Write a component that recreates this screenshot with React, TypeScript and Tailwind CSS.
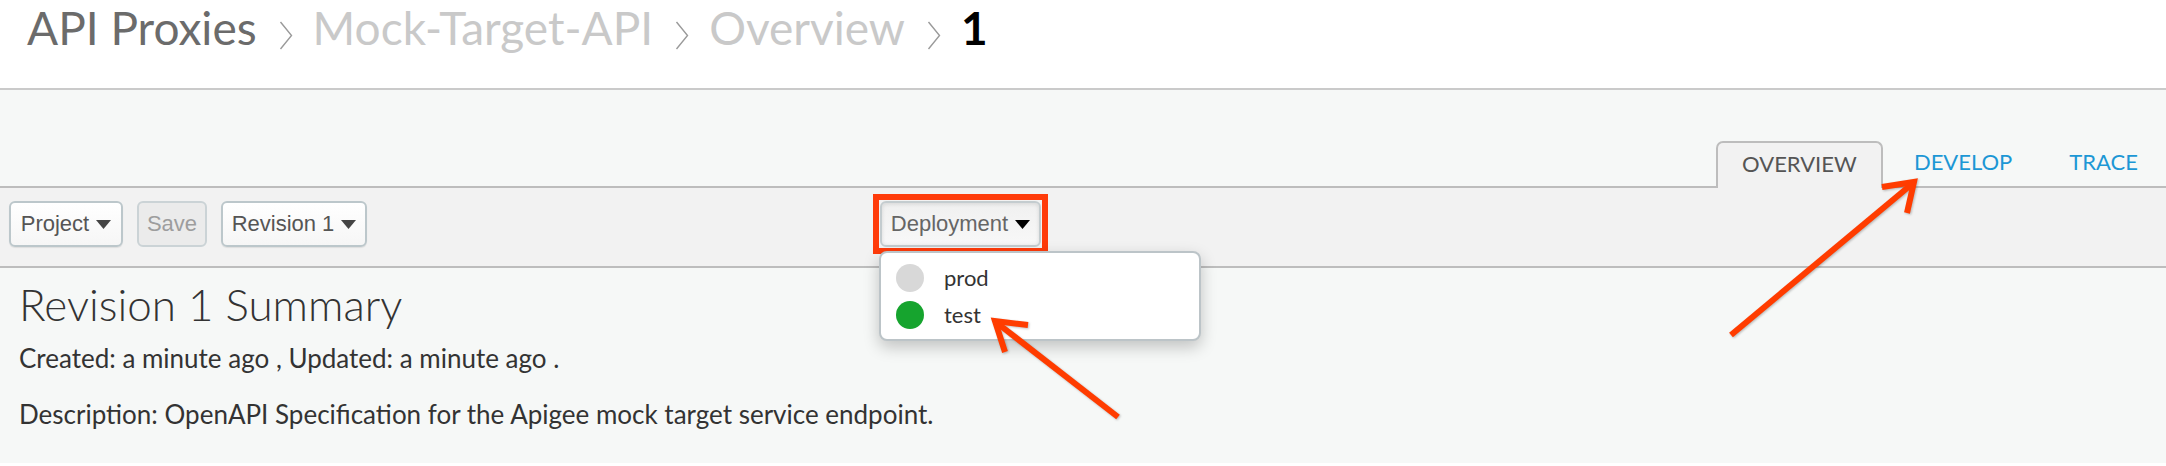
import React from 'react';

const lato = { fontFamily: 'Lato, "Open Sans", sans-serif' };

const Chevron = () => (
  <svg width="14" height="29" viewBox="0 0 14 29" className="ml-[22px] mr-[20px] mt-[16px] shrink-0">
    <path d="M1.5 1 L12.5 14.5 L1.5 28" fill="none" stroke="#9a9a9a" strokeWidth="1.4" />
  </svg>
);

const Caret = ({ color = '#444' }: { color?: string }) => (
  <svg width="15" height="9" viewBox="0 0 15 9" className="ml-[7px] shrink-0">
    <path d="M0 0 H15 L7.5 9 Z" fill={color} />
  </svg>
);

const ToolButton: React.FC<{ label: string; caret?: boolean; disabled?: boolean; className?: string }> = ({
  label,
  caret = true,
  disabled,
  className = '',
}) => (
  <button
    className={`flex h-[46px] items-center justify-center rounded-[6px] border-2 text-[22px] leading-none font-['Liberation_Sans',Arial,sans-serif] ${
      disabled
        ? 'border-[#cbd3d6] bg-[#ebebeb] text-[#9d9d9d]'
        : 'border-[#bcc7cb] bg-gradient-to-b from-white to-[#f6f6f6] text-[#555] shadow-[0_1px_1px_rgba(0,0,0,0.08)]'
    } ${className}`}
  >
    {label}
    {caret && <Caret />}
  </button>
);

const Tab: React.FC<{ label: string; className?: string }> = ({ label, className = '' }) => (
  <div className={`flex h-[47px] items-start pt-[12px] text-[22px] leading-[22px] text-[#1c97d5] ${className}`}>{label}</div>
);

export default function App() {
  return (
    <div className="relative h-[466px] w-[2166px] overflow-hidden bg-white" style={lato}>
      {/* breadcrumb */}
      <header className="flex h-[90px] items-start border-b-2 border-[#cacaca] bg-white pl-[27px] pt-[5px] text-[46px] leading-[46px]">
        <span className="text-[#6b6b6b]">API Proxies</span>
        <Chevron />
        <span className="text-[#c9c9c9]">Mock-Target-API</span>
        <Chevron />
        <span className="text-[#c9c9c9]">Overview</span>
        <Chevron />
        <span className="font-bold text-black">1</span>
      </header>

      {/* tabs */}
      <div className="flex h-[96px] items-end justify-end bg-[#f6f8f7] pr-[28px]">
        <div className="relative z-10 mb-[-2px] flex h-[47px] w-[167px] items-start justify-center rounded-t-[7px] border-x-2 border-t-2 border-[#bdbdbd] bg-[#f2f2f2] pt-[10px] text-[22px] leading-[22px] text-[#555]">
          OVERVIEW
        </div>
        <Tab label="DEVELOP" className="ml-[31px]" />
        <Tab label="TRACE" className="ml-[57px]" />
      </div>

      {/* toolbar */}
      <div className="flex h-[82px] items-start border-y-2 border-[#bdbdbd] bg-[#f2f2f2] px-[9px] pt-[13px]">
        <ToolButton label="Project" className="w-[114px]" />
        <ToolButton label="Save" caret={false} disabled className="ml-[14px] w-[70px]" />
        <ToolButton label="Revision 1" className="ml-[14px] w-[146px]" />

        <div className="relative ml-[513px]">
          <button className="flex h-[46px] w-[161px] items-center justify-center rounded-[6px] border-2 border-[#c4cccf] bg-gradient-to-b from-[#f0f0f0] to-[#f8f8f8] font-['Liberation_Sans',Arial,sans-serif] text-[22px] leading-none text-[#666] shadow-[inset_0_1px_4px_rgba(0,0,0,0.12)]">
            Deployment
            <Caret color="#000" />
          </button>
          <div className="pointer-events-none absolute -inset-[7px] border-[6px] border-[#ff3b0a]" />

          <div className="absolute left-[-1px] top-[50px] z-20 h-[90px] w-[322px] rounded-[8px] border-2 border-[#bcc4c8] bg-white pl-[15px] pt-[6px] text-[22px] text-[#333] shadow-[0_6px_16px_rgba(0,0,0,0.22)]">
            <div className="flex h-[37px] items-center">
              <span className="h-[28px] w-[28px] rounded-full bg-[#d8d8d8]" />
              <span className="ml-[20px] leading-none">prod</span>
            </div>
            <div className="flex h-[37px] items-center">
              <span className="h-[28px] w-[28px] rounded-full bg-[#16a42e]" />
              <span className="ml-[20px] leading-none">test</span>
            </div>
          </div>
        </div>
      </div>

      {/* summary */}
      <div className="h-[195px] bg-[#f6f8f7] pl-[19px] pt-[14px] text-[#333]">
        <h1 className="text-[44px] font-light leading-[44px]">Revision 1 Summary</h1>
        <p className="mt-[19px] text-[26px] leading-[26px]">Created: a minute ago , Updated: a minute ago .</p>
        <p className="mt-[30px] text-[26px] leading-[26px]">
          Description: OpenAPI Specification for the Apigee mock target service endpoint.
        </p>
      </div>

      {/* callout arrows */}
      <svg
        className="pointer-events-none absolute left-0 top-0 z-30"
        width="2166"
        height="466"
        style={{ filter: 'drop-shadow(1px 1px 1px rgba(0,0,0,0.25))' }}
      >
        <g stroke="#ff3c00" strokeWidth="6" fill="none" strokeLinejoin="miter">
          <line x1="1731" y1="335" x2="1912" y2="184" />
          <polyline points="1882,187 1914,182 1907,213" />
          <line x1="1118" y1="417" x2="997" y2="323" />
          <polyline points="1028,325 995,321 1005,352" />
        </g>
      </svg>
    </div>
  );
}
